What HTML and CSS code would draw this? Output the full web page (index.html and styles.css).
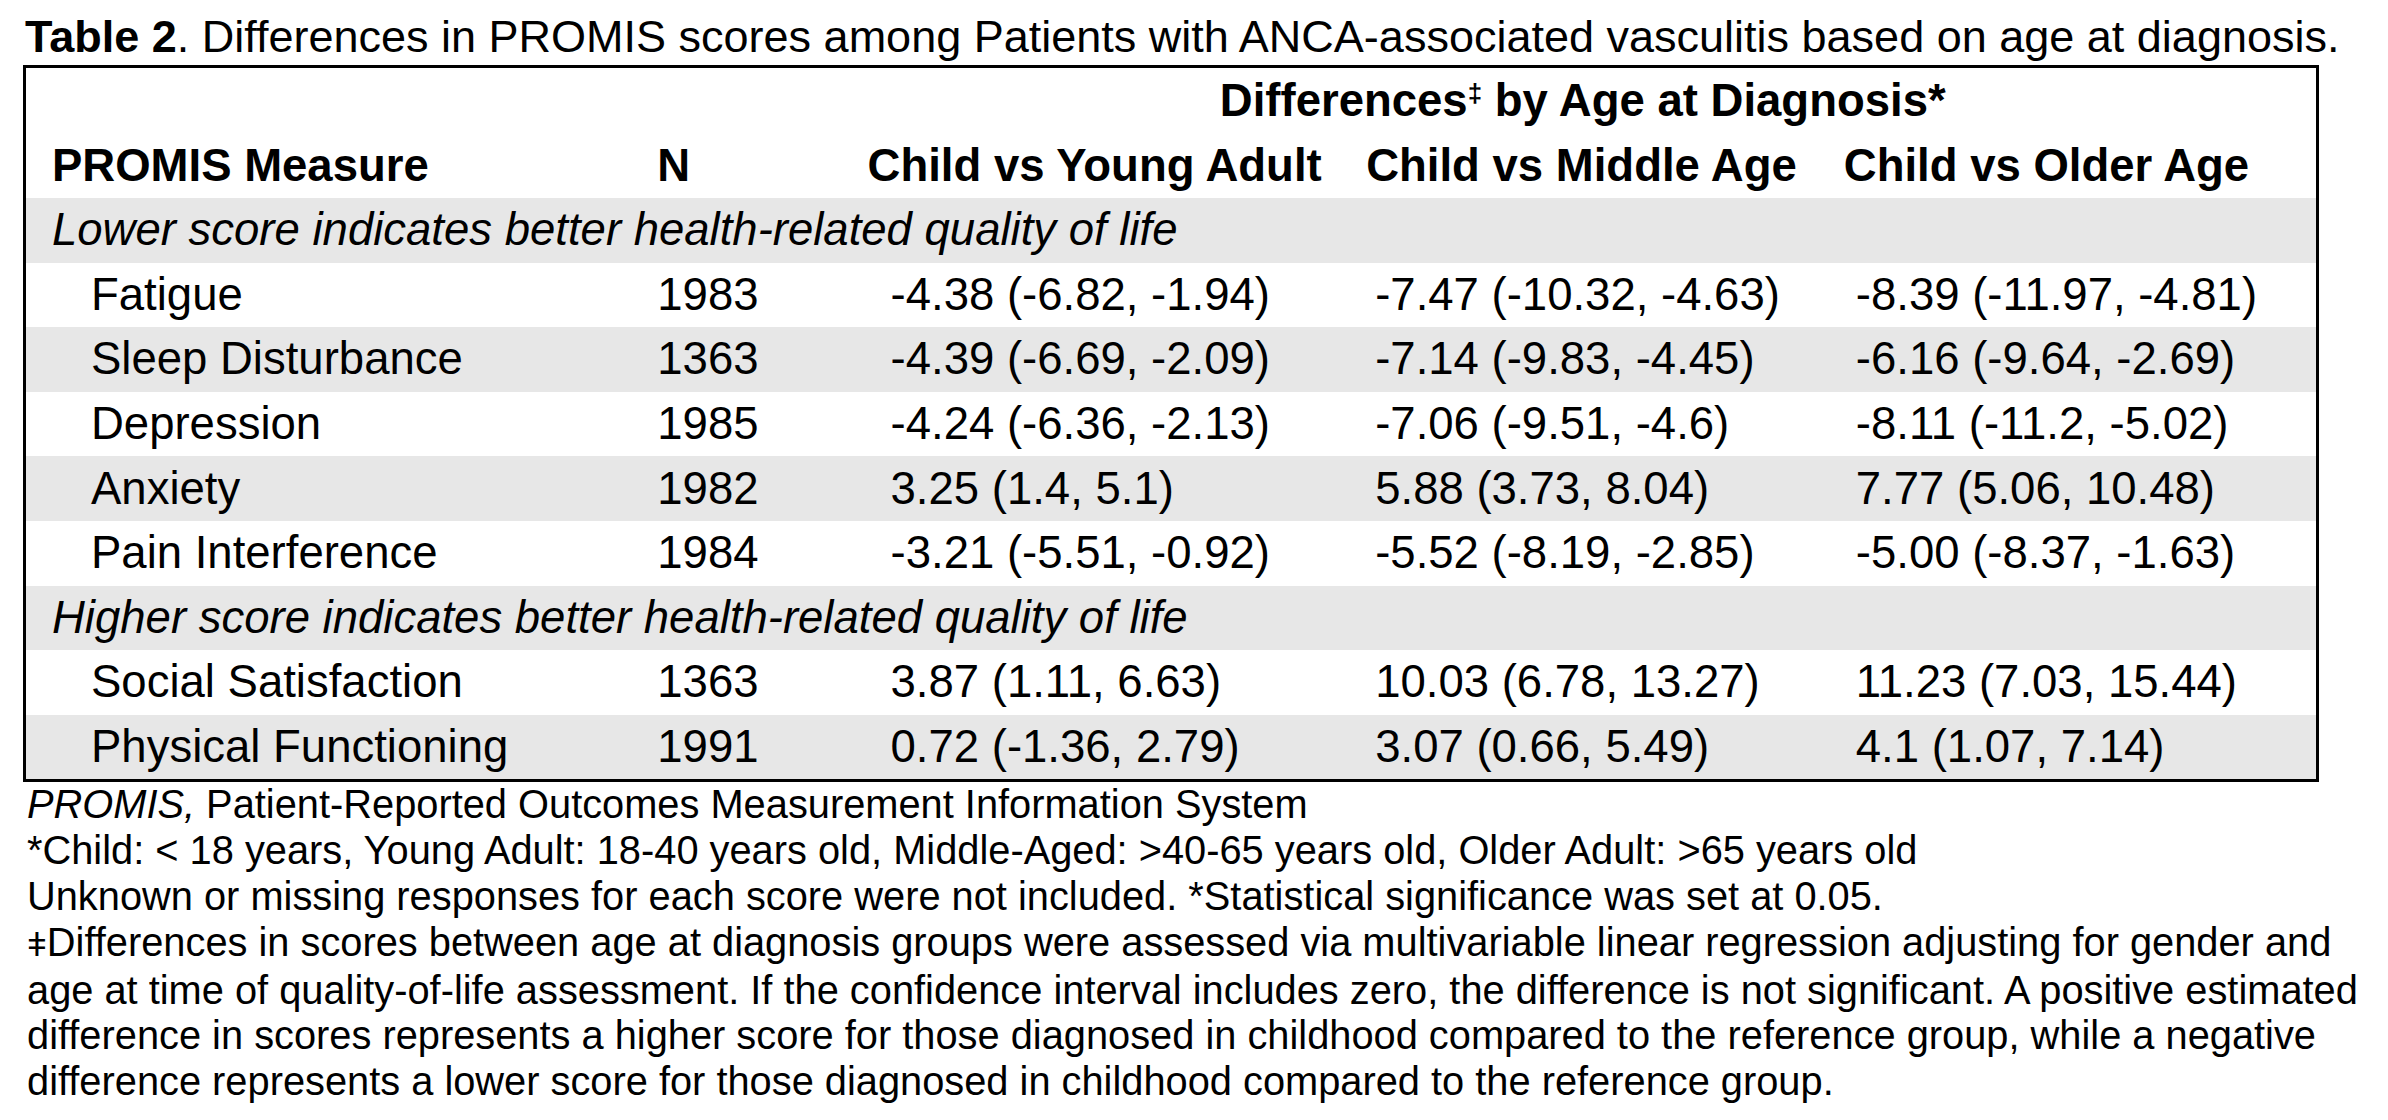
FILE: index.html
```html
<!DOCTYPE html>
<html lang="en">
<head>
<meta charset="utf-8">
<title>Table 2</title>
<link rel="stylesheet" href="styles.css">
</head>
<body>
<div class="page">
  <div class="caption"><b>Table 2</b>. Differences in PROMIS scores among Patients with ANCA-associated vasculitis based on age at diagnosis.</div>
  <table class="data">
    <colgroup>
      <col class="c-measure">
      <col class="c-n">
      <col class="c-young">
      <col class="c-middle">
      <col class="c-older">
    </colgroup>
    <thead>
      <tr class="hrow">
        <th></th>
        <th></th>
        <th colspan="3" class="span-head">Differences<sup>‡</sup> by Age at Diagnosis*</th>
      </tr>
      <tr class="hrow">
        <th class="h-measure">PROMIS Measure</th>
        <th class="h-n">N</th>
        <th class="h-young">Child vs Young Adult</th>
        <th class="h-middle">Child vs Middle Age</th>
        <th class="h-older">Child vs Older Age</th>
      </tr>
    </thead>
    <tbody>
      <tr class="group shade"><td colspan="5">Lower score indicates better health-related quality of life</td></tr>
      <tr><td class="item">Fatigue</td><td class="n">1983</td><td class="v3">-4.38 (-6.82, -1.94)</td><td class="v4">-7.47 (-10.32, -4.63)</td><td class="v5">-8.39 (-11.97, -4.81)</td></tr>
      <tr class="shade"><td class="item">Sleep Disturbance</td><td class="n">1363</td><td class="v3">-4.39 (-6.69, -2.09)</td><td class="v4">-7.14 (-9.83, -4.45)</td><td class="v5">-6.16 (-9.64, -2.69)</td></tr>
      <tr><td class="item">Depression</td><td class="n">1985</td><td class="v3">-4.24 (-6.36, -2.13)</td><td class="v4">-7.06 (-9.51, -4.6)</td><td class="v5">-8.11 (-11.2, -5.02)</td></tr>
      <tr class="shade"><td class="item">Anxiety</td><td class="n">1982</td><td class="v3">3.25 (1.4, 5.1)</td><td class="v4">5.88 (3.73, 8.04)</td><td class="v5">7.77 (5.06, 10.48)</td></tr>
      <tr><td class="item">Pain Interference</td><td class="n">1984</td><td class="v3">-3.21 (-5.51, -0.92)</td><td class="v4">-5.52 (-8.19, -2.85)</td><td class="v5">-5.00 (-8.37, -1.63)</td></tr>
      <tr class="group shade"><td colspan="5">Higher score indicates better health-related quality of life</td></tr>
      <tr><td class="item">Social Satisfaction</td><td class="n">1363</td><td class="v3">3.87 (1.11, 6.63)</td><td class="v4">10.03 (6.78, 13.27)</td><td class="v5">11.23 (7.03, 15.44)</td></tr>
      <tr class="shade"><td class="item">Physical Functioning</td><td class="n">1991</td><td class="v3">0.72 (-1.36, 2.79)</td><td class="v4">3.07 (0.66, 5.49)</td><td class="v5">4.1 (1.07, 7.14)</td></tr>
    </tbody>
  </table>
  <div class="notes">
    <p><i>PROMIS,</i> Patient-Reported Outcomes Measurement Information System</p>
    <p>*Child: &lt; 18 years, Young Adult: 18-40 years old, Middle-Aged: &gt;40-65 years old, Older Adult: &gt;65 years old</p>
    <p>Unknown or missing responses for each score were not included. *Statistical significance was set at 0.05.</p>
    <p><span class="dag">ǂ</span>Differences in scores between age at diagnosis groups were assessed via multivariable linear regression adjusting for gender and<br>age at time of quality-of-life assessment. If the confidence interval includes zero, the difference is not significant. A positive estimated<br>difference in scores represents a higher score for those diagnosed in childhood compared to the reference group, while a negative<br>difference represents a lower score for those diagnosed in childhood compared to the reference group.</p>
  </div>
</div>
</body>
</html>
```

FILE: styles.css
```css
html, body {
  margin: 0;
  padding: 0;
  background: #ffffff;
}

body {
  font-family: "Liberation Sans", Arial, sans-serif;
  color: #000000;
}

.page {
  width: 2388px;
  height: 1120px;
  overflow: hidden;
}

.caption {
  padding: 9px 0 0 25px;
  height: 56px;
  line-height: 56px;
  font-size: 45px;
  white-space: nowrap;
}

.data {
  margin-left: 23px;
  width: 2296px;
  border: 3px solid #000000;
  border-collapse: collapse;
  table-layout: fixed;
  font-size: 45.5px;
}

.c-measure { width: 614px; }
.c-n { width: 210px; }
.c-young { width: 500px; }
.c-middle { width: 480px; }
.c-older { width: 486px; }

.data th,
.data td {
  padding: 0;
  height: 64.6px;
  white-space: nowrap;
  text-align: left;
  vertical-align: middle;
}

.hrow th {
  font-weight: bold;
  height: 65px;
}

.span-head {
  text-align: center !important;
}

.span-head sup {
  font-size: 26px;
  vertical-align: 14px;
  line-height: 0;
}

.h-measure { padding-left: 26px !important; }
.h-n { padding-left: 18px !important; }
.h-young { padding-left: 18px !important; }
.h-middle { padding-left: 16px !important; }
.h-older { padding-left: 13px !important; }

.shade td {
  background: #e7e7e7;
}

.group td {
  font-style: italic;
  padding-left: 26px;
}

.item { padding-left: 65px !important; }
.n { padding-left: 18px !important; }
.v3 { padding-left: 41px !important; }
.v4 { padding-left: 25px !important; }
.v5 { padding-left: 25px !important; }

.notes {
  padding-left: 27px;
  font-size: 39.8px;
  line-height: 45.8px;
  white-space: nowrap;
}

.notes p {
  margin: 0;
}

.dag {
  font-size: 34px;
}
```
